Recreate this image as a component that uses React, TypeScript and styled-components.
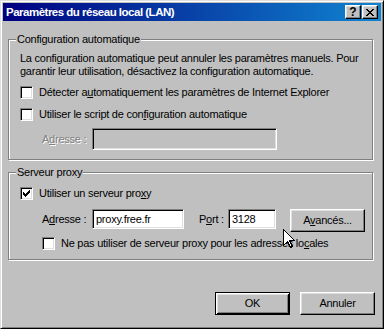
import React from "react";
import styled, { createGlobalStyle, css } from "styled-components";

const Global = createGlobalStyle`
  html, body { margin: 0; padding: 0; background: #c0c0c0; }
  body { font-family: "Liberation Sans", Arial, sans-serif; font-size: 11px; }
`;

const Window = styled.div`
  position: relative;
  box-sizing: border-box;
  width: 384px;
  height: 329px;
  background: #c0c0c0;
  border: 1px solid;
  border-color: #dfdfdf #000 #000 #dfdfdf;
  box-shadow: inset 1px 1px 0 #fff, inset -1px -1px 0 #808080;
  padding: 2px;
  display: flex;
  flex-direction: column;
  color: #000;
  font-family: "Liberation Sans", Arial, sans-serif;
  font-size: 11px;
  line-height: 13px;
  letter-spacing: -0.25px;
`;

const TitleBar = styled.div`
  height: 18px;
  flex: none;
  display: flex;
  align-items: center;
  padding: 0 3px 0 3px;
  background: linear-gradient(to right, #000080, #1084d0);
`;

const Title = styled.div`
  flex: 1;
  color: #fff;
  font-weight: bold;
  font-size: 11.5px;
  letter-spacing: -0.5px;
  white-space: nowrap;
`;

const TitleButton = styled.div<{ $gap?: number }>`
  box-sizing: border-box;
  width: 16px;
  height: 14px;
  background: #c0c0c0;
  border: 1px solid;
  border-color: #fff #000 #000 #fff;
  box-shadow: inset -1px -1px 0 #808080, inset 1px 1px 0 #dfdfdf;
  margin-left: ${(p) => p.$gap ?? 0}px;
  display: flex;
  align-items: center;
  justify-content: center;
  font-weight: bold;
  font-size: 12px;
  line-height: 12px;
  letter-spacing: 0;
`;

const Body = styled.div`
  flex: 1;
  display: flex;
  flex-direction: column;
  padding: 18px 6px 0 5px;
`;

const Group = styled.div<{ $h: number; $mt?: number; $pt: number }>`
  position: relative;
  box-sizing: border-box;
  width: 365px;
  height: ${(p) => p.$h}px;
  margin-top: ${(p) => p.$mt ?? 0}px;
  border: 1px solid #808080;
  box-shadow: inset 1px 1px 0 #fff, 1px 1px 0 #fff;
  padding: ${(p) => p.$pt}px 0 0 11px;
  display: flex;
  flex-direction: column;
  align-items: flex-start;
`;

const Legend = styled.span`
  position: absolute;
  top: -7px;
  left: 7px;
  padding: 0 1px;
  background: #c0c0c0;
  white-space: nowrap;
`;

const Para = styled.p`
  margin: 0;
  width: 352px;
`;

const CheckRow = styled.label<{ $mt: number; $indent?: number }>`
  display: flex;
  align-items: center;
  gap: 6px;
  height: 13px;
  margin-top: ${(p) => p.$mt}px;
  margin-left: ${(p) => p.$indent ?? 0}px;
  white-space: nowrap;
`;

const Box = styled.span`
  box-sizing: border-box;
  width: 13px;
  height: 13px;
  flex: none;
  background: #fff;
  border: 1px solid;
  border-color: #808080 #fff #fff #808080;
  box-shadow: inset 1px 1px 0 #000, inset -1px -1px 0 #dfdfdf;
  display: flex;
  align-items: center;
  justify-content: center;
`;

const FieldRow = styled.div<{ $mt: number }>`
  display: flex;
  align-items: center;
  margin-top: ${(p) => p.$mt}px;
  margin-left: 22px;
`;

const ProxyRow = styled.div<{ $mt: number }>`
  display: flex;
  align-items: flex-start;
  margin-top: ${(p) => p.$mt}px;
  margin-left: 22px;
`;

const Label = styled.span<{ $w: number; $ml?: number; $disabled?: boolean; $h?: number }>`
  width: ${(p) => p.$w}px;
  margin-left: ${(p) => p.$ml ?? 0}px;
  white-space: nowrap;
  ${(p) => p.$h && css`height: ${p.$h}px; line-height: ${p.$h}px;`}
  ${(p) =>
    p.$disabled &&
    css`
      color: #808080;
      text-shadow: 1px 1px 0 #fff;
    `}
`;

const TextBox = styled.div<{ $w: number; $h: number; $disabled?: boolean }>`
  box-sizing: border-box;
  width: ${(p) => p.$w}px;
  height: ${(p) => p.$h}px;
  background: ${(p) => (p.$disabled ? "#c0c0c0" : "#fff")};
  border: 1px solid;
  border-color: #808080 #fff #fff #808080;
  box-shadow: inset 1px 1px 0 #000, inset -1px -1px 0 #dfdfdf;
  padding: 0 0 0 3px;
  line-height: ${(p) => p.$h - 2}px;
  white-space: nowrap;
`;

const Button = styled.div<{ $default?: boolean; $ml?: number }>`
  box-sizing: border-box;
  width: 75px;
  height: 23px;
  flex: none;
  margin-left: ${(p) => p.$ml ?? 0}px;
  background: #c0c0c0;
  border: 1px solid;
  border-color: #fff #000 #000 #fff;
  box-shadow: inset -1px -1px 0 #808080, inset 1px 1px 0 #dfdfdf;
  display: flex;
  align-items: center;
  justify-content: center;
  ${(p) =>
    p.$default &&
    css`
      border-color: #000;
      box-shadow: inset 1px 1px 0 #fff, inset -1px -1px 0 #000, inset 2px 2px 0 #dfdfdf,
        inset -2px -2px 0 #808080;
    `}
`;

const ButtonRow = styled.div`
  display: flex;
  justify-content: flex-end;
  gap: 10px;
  margin-top: 32px;
`;

const U = styled.span`
  text-decoration: underline;
  text-underline-offset: 1px;
`;

const Cursor = styled.svg`
  position: absolute;
  left: 282px;
  top: 228px;
`;

const CHECK = ["......X", ".....XX", "X...XXX", "XX.XXX.", "XXXXX..", ".XXX...", "..X...."];
const CLOSE = ["XX....XX", ".XX..XX.", "..XXXX..", "...XX...", "..XXXX..", ".XX..XX.", "XX....XX"];

function Pixels({ rows }: { rows: string[] }) {
  const w = rows[0].length;
  const h = rows.length;
  return (
    <svg width={w} height={h} viewBox={`0 0 ${w} ${h}`} shapeRendering="crispEdges">
      {rows.flatMap((r, y) =>
        r.split("").map((c, x) => (c === "X" ? <rect key={`${x}-${y}`} x={x} y={y} width={1} height={1} fill="#000" /> : null))
      )}
    </svg>
  );
}

function Check({ checked }: { checked?: boolean }) {
  return <Box>{checked && <Pixels rows={CHECK} />}</Box>;
}

export default function App() {
  return (
    <>
      <Global />
      <Window>
        <TitleBar>
          <Title>Paramètres du réseau local (LAN)</Title>
          <TitleButton>?</TitleButton>
          <TitleButton $gap={1}>
            <Pixels rows={CLOSE} />
          </TitleButton>
        </TitleBar>
        <Body>
          <Group $h={121} $pt={12}>
            <Legend>Configuration automatique</Legend>
            <Para>
              La configuration automatique peut annuler les paramètres manuels. Pour garantir leur utilisation,
              désactivez la configuration automatique.
            </Para>
            <CheckRow $mt={8}>
              <Check />
              <span>
                Détecter a<U>u</U>tomatiquement les paramètres de Internet Explorer
              </span>
            </CheckRow>
            <CheckRow $mt={9}>
              <Check />
              <span>
                Utiliser le script de con<U>f</U>iguration automatique
              </span>
            </CheckRow>
            <FieldRow $mt={7}>
              <Label $w={50} $disabled>
                A<U>d</U>resse :
              </Label>
              <TextBox $w={185} $h={22} $disabled />
            </FieldRow>
          </Group>
          <Group $h={88} $mt={12} $pt={14}>
            <Legend>Serveur proxy</Legend>
            <CheckRow $mt={0}>
              <Check checked />
              <span>
                Utiliser un serveur pro<U>x</U>y
              </span>
            </CheckRow>
            <ProxyRow $mt={9}>
              <Label $w={50} $h={20}>
                A<U>d</U>resse :
              </Label>
              <TextBox $w={92} $h={20}>
                proxy.free.fr
              </TextBox>
              <Label $w={29} $ml={15} $h={20}>
                P<U>o</U>rt :
              </Label>
              <TextBox $w={48} $h={20}>
                3128
              </TextBox>
              <Button $ml={14}>
                <span>
                  A<U>v</U>ancés...
                </span>
              </Button>
            </ProxyRow>
            <CheckRow $mt={5} $indent={22}>
              <Check />
              <span>
                Ne pas utiliser de serveur proxy pour les adresses lo<U>c</U>ales
              </span>
            </CheckRow>
          </Group>
          <ButtonRow>
            <Button $default>OK</Button>
            <Button>Annuler</Button>
          </ButtonRow>
        </Body>
        <Cursor width="13" height="20" viewBox="0 0 13 20" shapeRendering="crispEdges">
          <path
            d="M0.5 0.5 L0.5 16.5 L4.5 12.5 L7.5 18.5 L9.5 17.5 L6.5 11.5 L11.5 11.5 Z"
            fill="#fff"
            stroke="#000"
            strokeWidth="1"
          />
        </Cursor>
      </Window>
    </>
  );
}
